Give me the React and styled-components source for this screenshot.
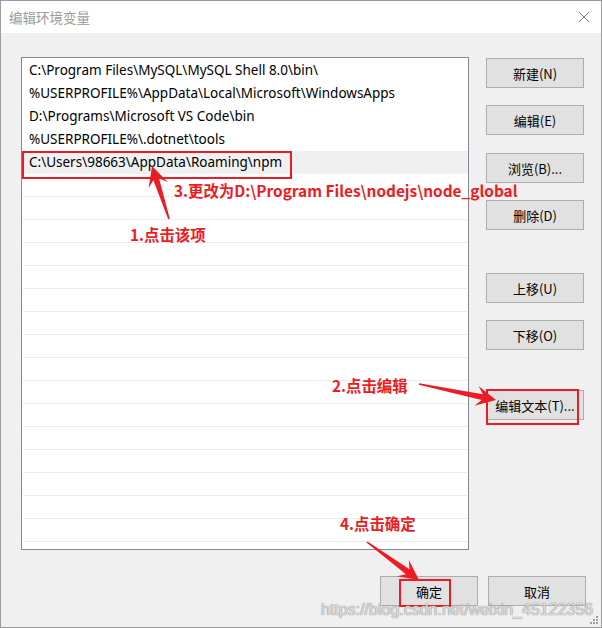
import React from "react";
import styled, { createGlobalStyle } from "styled-components";

const GlobalStyle = createGlobalStyle`
  body {
    margin: 0;
    background: #ffffff;
    font-family: "Noto Sans", "Noto Sans CJK SC", sans-serif;
  }
`;

const RED = "#ec1c24";
const CJK = `"Noto Sans CJK SC", sans-serif`;
const LATIN = `"Noto Sans", "Noto Sans CJK SC", sans-serif`;

const paths = [
  "C:\\Program Files\\MySQL\\MySQL Shell 8.0\\bin\\",
  "%USERPROFILE%\\AppData\\Local\\Microsoft\\WindowsApps",
  "D:\\Programs\\Microsoft VS Code\\bin",
  "%USERPROFILE%\\.dotnet\\tools",
  "C:\\Users\\98663\\AppData\\Roaming\\npm",
];

const sideButtons = [
  { label: "新建(N)", space: 1 },
  { label: "编辑(E)", space: 17 },
  { label: "浏览(B)...", space: 18 },
  { label: "删除(D)", space: 17 },
  { label: "上移(U)", space: 43 },
  { label: "下移(O)", space: 17 },
  { label: "编辑文本(T)...", space: 40 },
];

// tapered arrow polygon from tail to tip
const arrowPoints = (tx, ty, px, py, headLen = 20, headHalf = 10) => {
  const dx = px - tx;
  const dy = py - ty;
  const len = Math.hypot(dx, dy);
  const ux = dx / len;
  const uy = dy / len;
  const nx = -uy;
  const ny = ux;
  const joinX = px - ux * (headLen - 6);
  const joinY = py - uy * (headLen - 6);
  const barbX = px - ux * headLen;
  const barbY = py - uy * headLen;
  const pts = [
    [tx + nx * 0.8, ty + ny * 0.8],
    [joinX + nx * 3, joinY + ny * 3],
    [barbX + nx * headHalf, barbY + ny * headHalf],
    [px, py],
    [barbX - nx * headHalf, barbY - ny * headHalf],
    [joinX - nx * 3, joinY - ny * 3],
    [tx - nx * 0.8, ty - ny * 0.8],
  ];
  return pts.map((p) => p.map((v) => v.toFixed(1)).join(",")).join(" ");
};

export default function App() {
  return (
    <>
      <GlobalStyle />
      <Window>
        <TitleBar>
          <Title>编辑环境变量</Title>
          <CloseIcon width="12" height="12" viewBox="0 0 12 12">
            <path d="M1 1 L11 11 M11 1 L1 11" stroke="#7a7a7a" strokeWidth="1" fill="none" />
          </CloseIcon>
        </TitleBar>
        <Body>
          <MainRow>
            <List>
              {paths.map((p, i) => (
                <Row key={p} $selected={i === paths.length - 1}>
                  {p}
                </Row>
              ))}
              {Array.from({ length: 16 }).map((_, i) => (
                <EmptyRow key={i} />
              ))}
            </List>
            <ButtonColumn>
              {sideButtons.map((b) => (
                <Button key={b.label} $space={b.space}>
                  {b.label}
                </Button>
              ))}
            </ButtonColumn>
          </MainRow>
          <Footer>
            <Button>确定</Button>
            <Button>取消</Button>
          </Footer>
        </Body>

        <Mark $x={21} $y={150} $w={270} $h={28} />
        <Mark $x={485} $y={388} $w={93} $h={36} />
        <Mark $x={398} $y={578} $w={52} $h={28} />

        <Note $x={129} $y={223}>1.点击该项</Note>
        <Note $x={331} $y={374}>2.点击编辑</Note>
        <Note $x={173} $y={179}>3.更改为D:\Program Files\nodejs\node_global</Note>
        <Note $x={339} $y={512}>4.点击确定</Note>

        <Arrows width="602" height="628" viewBox="0 0 602 628">
          <polygon points={arrowPoints(169, 219, 152, 166)} fill={RED} />
          <polygon points={arrowPoints(419, 384, 496, 400)} fill={RED} />
          <polygon points={arrowPoints(367, 542, 419, 580)} fill={RED} />
        </Arrows>

        <Watermark>https://blog.csdn.net/weixin_45122356</Watermark>
        <Grip width="10" height="10" viewBox="0 0 10 10">
          {[
            [8, 2],
            [8, 5],
            [5, 5],
            [8, 8],
            [5, 8],
            [2, 8],
          ].map(([cx, cy]) => (
            <rect key={`${cx}-${cy}`} x={cx - 1} y={cy - 1} width="2" height="2" fill="#a0a0a0" />
          ))}
        </Grip>
      </Window>
    </>
  );
}

const Window = styled.div`
  position: relative;
  width: 602px;
  height: 628px;
  box-sizing: border-box;
  border: 1px solid #9b9b9b;
  background: #f0f0f0;
  display: flex;
  flex-direction: column;
  overflow: hidden;
`;

const TitleBar = styled.div`
  height: 32px;
  background: #ffffff;
  display: flex;
  align-items: center;
  justify-content: space-between;
  padding: 0 11px 0 8px;
`;

const Title = styled.div`
  font-family: ${CJK};
  font-size: 13.5px;
  color: #9a9a9a;
  margin-top: -1px;
`;

const CloseIcon = styled.svg`
  display: block;
`;

const Body = styled.div`
  flex: 1;
  display: flex;
  flex-direction: column;
  padding: 24px 15px 0 20px;
`;

const MainRow = styled.div`
  display: flex;
  gap: 17px;
`;

const List = styled.div`
  width: 448px;
  height: 493px;
  box-sizing: border-box;
  background: #ffffff;
  border: 1px solid #828790;
  padding-top: 1px;
  overflow: hidden;
`;

const Row = styled.div`
  height: 23px;
  line-height: 23px;
  padding-left: 7px;
  font-family: ${LATIN};
  font-size: 13.5px;
  color: #000000;
  white-space: nowrap;
  background: ${(p) => (p.$selected ? "#f0f0f0" : "transparent")};
`;

const EmptyRow = styled.div`
  height: 22px;
  margin: 0 1px;
  border-bottom: 1px solid #ebebeb;
`;

const ButtonColumn = styled.div`
  display: flex;
  flex-direction: column;
`;

const Button = styled.div`
  width: 98px;
  height: 30px;
  box-sizing: border-box;
  margin-top: ${(p) => p.$space || 0}px;
  background: #e1e1e1;
  border: 1px solid #adadad;
  display: flex;
  align-items: center;
  justify-content: center;
  font-family: ${CJK};
  font-size: 13px;
  color: #000000;
`;

const Footer = styled.div`
  display: flex;
  justify-content: flex-end;
  gap: 10px;
  margin-top: 26px;
`;

const Mark = styled.div`
  position: absolute;
  left: ${(p) => p.$x}px;
  top: ${(p) => p.$y}px;
  width: ${(p) => p.$w}px;
  height: ${(p) => p.$h}px;
  box-sizing: border-box;
  border: 2px solid ${RED};
`;

const Note = styled.div`
  position: absolute;
  left: ${(p) => p.$x}px;
  top: ${(p) => p.$y}px;
  line-height: 20px;
  font-family: ${CJK};
  font-weight: 700;
  font-size: 15.4px;
  color: ${RED};
  white-space: nowrap;
`;

const Arrows = styled.svg`
  position: absolute;
  left: -1px;
  top: -1px;
  pointer-events: none;
`;

const Watermark = styled.div`
  position: absolute;
  left: 320px;
  top: 600px;
  font-family: "Liberation Sans", Arial, sans-serif;
  font-size: 16px;
  color: rgba(236, 236, 236, 0.85);
  text-shadow: 0 0 1px #8a8a8a, 0 0 1px #8a8a8a;
  white-space: nowrap;
`;

const Grip = styled.svg`
  position: absolute;
  right: 2px;
  bottom: 2px;
`;
